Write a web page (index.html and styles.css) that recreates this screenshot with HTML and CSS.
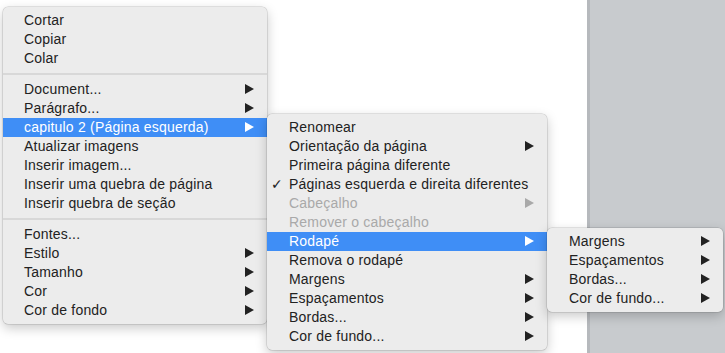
FILE: index.html
```html
<!DOCTYPE html>
<html lang="pt">

<head>
  <meta charset="UTF-8" />
  <meta name="viewport" content="width=device-width, initial-scale=1.0" />
  <title>Menu de contexto</title>
  <link rel="stylesheet" href="styles.css">
</head>

<body>
  <div class="desk">
    <div class="page"></div>
    <div class="side"></div>
  </div>

  <!-- Menu principal -->
  <ul class="menu menu-main" role="menu">
    <li class="item">Cortar</li>
    <li class="item">Copiar</li>
    <li class="item">Colar</li>
    <li class="sep" role="separator"></li>
    <li class="item sub">Document...</li>
    <li class="item sub">Parágrafo...</li>
    <li class="item sub active">capitulo 2 (Página esquerda)</li>
    <li class="item">Atualizar imagens</li>
    <li class="item">Inserir imagem...</li>
    <li class="item">Inserir uma quebra de página</li>
    <li class="item">Inserir quebra de seção</li>
    <li class="sep" role="separator"></li>
    <li class="item">Fontes...</li>
    <li class="item sub">Estilo</li>
    <li class="item sub">Tamanho</li>
    <li class="item sub">Cor</li>
    <li class="item sub">Cor de fondo</li>
  </ul>

  <!-- Submenu da seção -->
  <ul class="menu menu-section" role="menu">
    <li class="item">Renomear</li>
    <li class="item sub">Orientação da página</li>
    <li class="item">Primeira página diferente</li>
    <li class="item checked">Páginas esquerda e direita diferentes</li>
    <li class="item sub disabled">Cabeçalho</li>
    <li class="item disabled">Remover o cabeçalho</li>
    <li class="item sub active">Rodapé</li>
    <li class="item">Remova o rodapé</li>
    <li class="item sub">Margens</li>
    <li class="item sub">Espaçamentos</li>
    <li class="item sub">Bordas...</li>
    <li class="item sub">Cor de fundo...</li>
  </ul>

  <!-- Submenu do rodapé -->
  <ul class="menu menu-footer" role="menu">
    <li class="item sub">Margens</li>
    <li class="item sub">Espaçamentos</li>
    <li class="item sub">Bordas...</li>
    <li class="item sub">Cor de fundo...</li>
  </ul>
</body>

</html>
```

FILE: styles.css
```css
/* Base */
html,
body {
  margin: 0;
  padding: 0;
  height: 100%;
  overflow: hidden;
}

body {
  font-family: "Liberation Sans", Arial, sans-serif;
  font-size: 14px;
  letter-spacing: 0.2px;
  color: #222;
  background-color: #fff;
}

/* Document area behind the menus */
.desk {
  display: flex;
  height: 100%;
}

.page {
  flex: 1;
  background-color: #fff;
}

.side {
  width: 135px;
  background-color: #c8cbce;
  border-left: 3px solid #b6b9bd;
}

/* Context menus */
.menu {
  position: absolute;
  margin: 0;
  padding: 4px 0;
  list-style: none;
  background-color: #ececec;
  border-radius: 5px;
  box-shadow: 0 0 0 0.5px rgba(0, 0, 0, 0.18), 0 4px 12px rgba(0, 0, 0, 0.22);
}

.menu-main {
  left: 3px;
  top: 7px;
  width: 264px;
}

.menu-section {
  left: 267px;
  top: 114px;
  width: 280px;
}

.menu-footer {
  left: 547px;
  top: 228px;
  width: 176px;
}

/* Rows */
.item {
  position: relative;
  height: 19px;
  line-height: 19px;
  padding-left: 22px;
  white-space: nowrap;
}

.menu-main .item {
  padding-left: 21px;
}

.item.active {
  background-color: #3f8ef6;
  color: #fff;
}

.item.disabled {
  color: #a9a9a9;
}

/* Submenu arrow */
.item.sub::after {
  content: "";
  position: absolute;
  right: 13px;
  top: 4px;
  border-left: 9px solid #222;
  border-top: 5px solid transparent;
  border-bottom: 5px solid transparent;
}

.item.sub.active::after {
  border-left-color: #fff;
}

.item.sub.disabled::after {
  border-left-color: #a9a9a9;
}

/* Check mark */
.item.checked::before {
  content: "\2713";
  position: absolute;
  left: 4px;
  top: 0;
  font-family: "DejaVu Sans", sans-serif;
  font-size: 14px;
  font-weight: bold;
}

/* Separator */
.sep {
  height: 2px;
  margin: 5px 0;
  background-color: #d8d8d8;
}
```
